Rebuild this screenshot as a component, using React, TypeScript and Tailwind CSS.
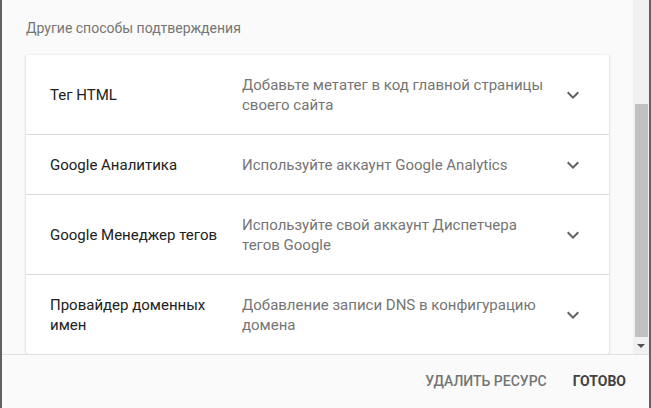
import type { ReactNode } from 'react'

interface MethodRow {
  title: string
  description: string
}

// Способы подтверждения
const METHODS: MethodRow[] = [
  { title: 'Тег HTML', description: 'Добавьте метатег в код главной страницы своего сайта' },
  { title: 'Google Аналитика', description: 'Используйте аккаунт Google Analytics' },
  { title: 'Google Менеджер тегов', description: 'Используйте свой аккаунт Диспетчера тегов Google' },
  { title: 'Провайдер доменных имен', description: 'Добавление записи DNS в конфигурацию домена' },
]

function ExpandIcon() {
  return (
    <div className="h-5 w-6 shrink-0 flex items-center justify-center">
      <svg className="w-6 h-6 shrink-0 text-[#616161]" viewBox="0 0 24 24" fill="currentColor">
        <path d="M16.59 8.59L12 13.17 7.41 8.59 6 10l6 6 6-6z" />
      </svg>
    </div>
  )
}

function Row({ row, first }: { row: MethodRow; first: boolean }) {
  return (
    <div className={`flex items-center pl-6 pr-6 pt-5 pb-[19px] text-[15px] ${first ? '' : 'border-t border-[#dcdcdc]'}`}>
      <div className="w-[192px] shrink-0 pr-4 text-[#212121]">{row.title}</div>
      <div className="flex-1 pr-[10px] text-[#757575]">{row.description}</div>
      <ExpandIcon />
    </div>
  )
}

function FooterButton({ children, primary }: { children: ReactNode; primary?: boolean }) {
  return (
    <button
      className={`px-[13px] h-9 uppercase text-[14px] ${
        primary ? 'font-bold text-[#424242]' : 'font-medium text-[#757575]'
      }`}
    >
      {children}
    </button>
  )
}

export default function App() {
  return (
    <div
      className="flex w-[651px] h-[408px] overflow-hidden bg-[#fafafa] text-[14px] leading-5"
      style={{ fontFamily: 'Roboto, "Noto Sans", sans-serif' }}
    >
      {/* край страницы слева */}
      <div className="w-[2px] shrink-0 bg-[#5f6368]" />

      <div className="flex-1 flex flex-col min-w-0">
        <div className="h-[354px] flex overflow-hidden">
          <div className="flex-1 pl-6 pr-6 overflow-hidden">
            <div className="pt-[18px] pb-[17px] text-[#757575]">Другие способы подтверждения</div>
            <div className="bg-white rounded-[2px] shadow-[0_1px_3px_rgba(0,0,0,0.18),0_0_1px_rgba(0,0,0,0.12)]">
              {METHODS.map((row, i) => (
                <Row key={row.title} row={row} first={i === 0} />
              ))}
            </div>
          </div>

          {/* полоса прокрутки */}
          <div className="w-4 shrink-0 bg-[#f1f1f1] flex flex-col items-center">
            <div className="h-[104px]" />
            <div className="w-[13px] h-[233px] bg-[#c1c1c1]" />
            <div className="flex-1 flex items-center justify-center">
              <div className="w-0 h-0 border-l-[4px] border-r-[4px] border-t-[4px] border-l-transparent border-r-transparent border-t-[#505050]" />
            </div>
          </div>
        </div>

        <div className="flex-1 border-t border-[#e0e0e0] flex items-center justify-end pr-[10px] pb-[2px]">
          <FooterButton>Удалить ресурс</FooterButton>
          <FooterButton primary>Готово</FooterButton>
        </div>
      </div>

      <div className="w-[2px] shrink-0 bg-[#5f6368]" />
    </div>
  )
}
